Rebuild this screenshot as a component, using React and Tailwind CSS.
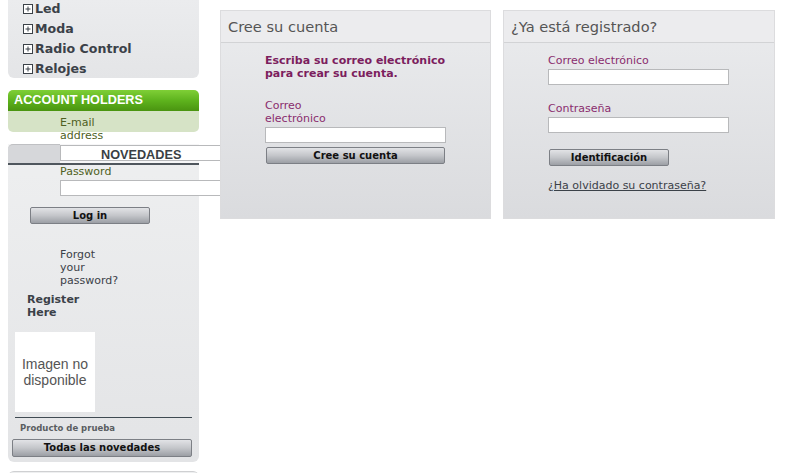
import React from "react"

const categories = ["Led", "Moda", "Radio Control", "Relojes"]

function PlusBox() {
  return (
    <svg width="10" height="10" viewBox="0 0 10 10" className="shrink-0">
      <rect x="0.5" y="0.5" width="9" height="9" fill="#fff" stroke="#3b4148" />
      <path d="M2.5 5h5M5 2.5v5" stroke="#3b4148" strokeWidth="1" />
    </svg>
  )
}

function GrayButton({ children, className }) {
  return (
    <button
      type="button"
      className={
        "block rounded-[2px] border border-[#7c7f85] bg-gradient-to-b from-[#e2e3e6] via-[#c4c6ca] to-[#9c9fa5] text-[10px] font-bold leading-none text-[#111] " +
        className
      }
    >
      {children}
    </button>
  )
}

function TextInput({ className }) {
  return (
    <input
      type="text"
      className={"block border border-[#b8b9bb] bg-white outline-none " + className}
    />
  )
}

export default function App() {
  return (
    <div
      className="flex min-h-[473px] w-[786px] overflow-hidden bg-white"
      style={{ fontFamily: '"DejaVu Sans", Verdana, sans-serif' }}
    >
      <aside className="ml-[8px] w-[191px] shrink-0">
        {/* categories */}
        <div className="flex h-[78px] flex-col rounded-b-[6px] bg-gradient-to-b from-[#ebecee] to-[#e4e5e7]">
          <ul className="-mt-[1px] pl-[15px]">
            {categories.map((c) => (
              <li key={c} className="flex h-[20px] items-center gap-[2px] text-[12.6px] font-bold text-[#3b4148]">
                <PlusBox />
                <span>{c}</span>
              </li>
            ))}
          </ul>
        </div>

        {/* account holders */}
        <div className="mt-[12px]">
          <div
            className="flex h-[21px] items-center rounded-t-[5px] bg-gradient-to-b from-[#7fcf36] via-[#5eb31d] to-[#4a9410] px-[6px] text-[12.7px] font-bold text-white"
            style={{ fontFamily: '"Liberation Sans", Arial, sans-serif' }}
          >
            ACCOUNT HOLDERS
          </div>
          <div className="h-[21px] rounded-b-[5px] bg-[#d6e3c6]">
            <form className="relative pl-[52px] pt-[4.5px] text-[11px] leading-[13px]">
              <div className="text-[#4f5f22]">
                E-mail
                <br />
                address
              </div>
              <TextInput className="mt-[3.5px] h-[16px] w-[170px]" />
              <div className="mt-[3.5px] text-[#4f5f22]">Password</div>
              <TextInput className="mt-[2.5px] h-[16px] w-[170px]" />
              <GrayButton className="-ml-[30px] mt-[11px] h-[17px] w-[120px]">Log in</GrayButton>
              <div className="mt-[23.5px] text-[#3b4148]">
                Forgot
                <br />
                your
                <br />
                password?
              </div>
              <div className="-ml-[33px] mt-[6px] font-bold text-[#3b4148]">
                Register
                <br />
                Here
              </div>
            </form>
          </div>
        </div>

        {/* novedades */}
        <div className="mt-[12px] rounded-b-[6px] bg-gradient-to-b from-[#eeeff0] to-[#e3e4e6] pb-[5px]">
          <div className="flex h-[21px] border-b-2 border-[#4f565d] bg-[#f6f6f7]">
            <div className="w-[52px] rounded-tl-[5px] border-t border-[#bfc0c3] bg-[#d6d7da]" />
            <h4
              className="relative pl-[41px] pt-[2px] text-[12.7px] font-bold text-[#3a3f44]"
              style={{ fontFamily: '"Liberation Sans", Arial, sans-serif' }}
            >
              NOVEDADES
            </h4>
          </div>
          <div
            className="ml-[7px] mt-[167px] flex h-[80px] w-[80px] items-center justify-center bg-white text-center text-[14px] leading-[16px] text-[#555]"
            style={{ fontFamily: '"Liberation Sans", Arial, sans-serif' }}
          >
            <span>
              Imagen no
              <br />
              disponible
            </span>
          </div>
          <div className="ml-[7px] mt-[5px] w-[177px] border-t border-[#3f4a52]" />
          <div className="ml-[12px] mt-[5px] text-[8.5px] font-bold leading-[11px] text-[#5a5d61]">Producto de prueba</div>
          <GrayButton className="ml-[4px] mt-[4.5px] h-[18px] w-[180px]">Todas las novedades</GrayButton>
        </div>

        <div className="mt-[9px] h-[10px] rounded-t-[6px] border-t border-[#cfd0d2] bg-[#eeeff0]" />
      </aside>

      <main className="ml-[21px] flex gap-[12px] pt-[10px]">
        {/* create account */}
        <section className="relative h-[209px] w-[271px] border border-[#dcdcde] bg-gradient-to-b from-[#ebecee] to-[#dadbde]">
          <h3 className="flex h-[32px] items-center border-b border-[#d2d3d5] bg-[#ececee] pl-[7px] text-[14.6px] text-[#555]">
            Cree su cuenta
          </h3>
          <div className="pl-[44px] pt-[10.5px] text-[11px] leading-[13px]">
            <p className="font-bold text-[#7c1e5e]">
              Escriba su correo electrónico
              <br />
              para crear su cuenta.
            </p>
            <div className="mt-[19px] text-[#8a2d6e]">
              Correo
              <br />
              electrónico
            </div>
            <TextInput className="mt-[2.5px] h-[16px] w-[181px]" />
            <GrayButton className="ml-[1px] mt-[4px] h-[17px] w-[179px]">Cree su cuenta</GrayButton>
          </div>
        </section>

        {/* already registered */}
        <section className="relative h-[209px] w-[272px] border border-[#dcdcde] bg-gradient-to-b from-[#ebecee] to-[#dadbde]">
          <h3 className="flex h-[32px] items-center border-b border-[#d2d3d5] bg-[#ececee] pl-[7px] text-[14.6px] text-[#555]">
            ¿Ya está registrado?
          </h3>
          <div className="pl-[44px] pt-[10.5px] text-[11px] leading-[13px]">
            <div className="text-[#8a2d6e]">Correo electrónico</div>
            <TextInput className="mt-[2.5px] h-[16px] w-[181px]" />
            <div className="mt-[16.5px] text-[#8a2d6e]">Contraseña</div>
            <TextInput className="mt-[2.5px] h-[16px] w-[181px]" />
            <GrayButton className="ml-[1px] mt-[16px] h-[17px] w-[120px]">Identificación</GrayButton>
            <a href="#" className="mt-[12.5px] block text-[#3b4148] underline">
              ¿Ha olvidado su contraseña?
            </a>
          </div>
        </section>
      </main>
    </div>
  )
}
